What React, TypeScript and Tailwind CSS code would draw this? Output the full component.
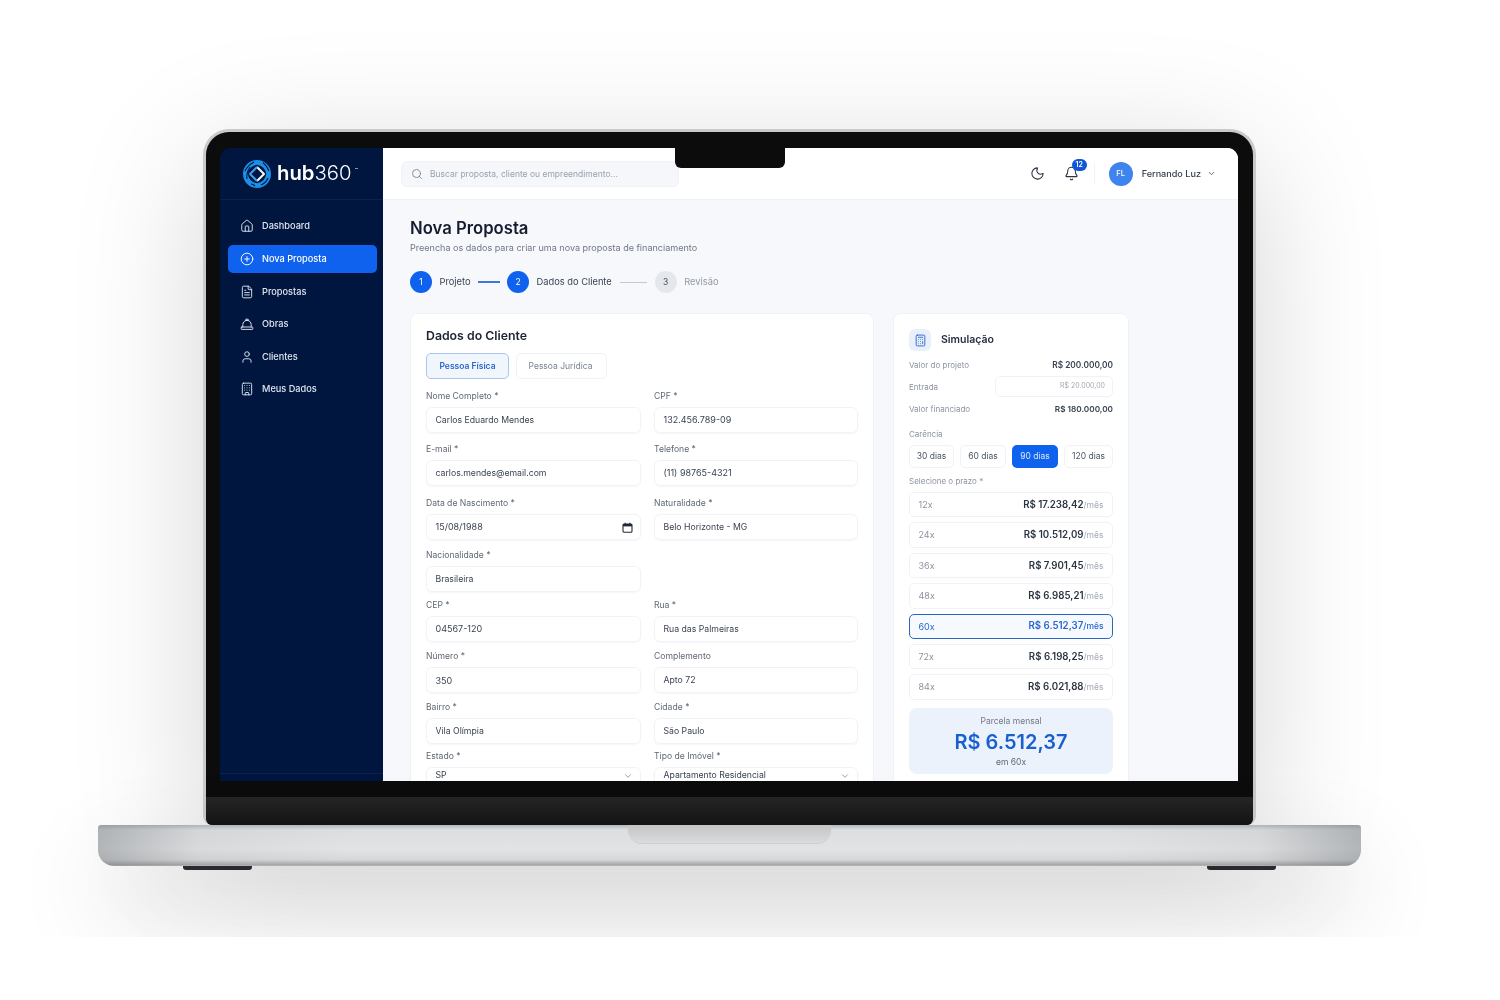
import React from "react";
import { House, CirclePlus, FileText, User, Building, Search, Moon, Bell, ChevronDown, Calculator } from "lucide-react";

function HatGlyph({ size }: { size: number; strokeWidth: number }) {
  return (
    <svg width={size} height={size} viewBox="0 0 14 14" fill="none" stroke="currentColor" strokeWidth={0.95} strokeLinecap="round" strokeLinejoin="round">
      <rect x="1.2" y="10" width="11.6" height="2.4" rx="0.6" />
      <path d="M2.8 10V7.6a4.2 4.2 0 0 1 8.4 0V10" />
      <path d="M5.8 3.6V2.2h2.4v1.4" />
    </svg>
  );
}

const nav = [
  { label: "Dashboard", Icon: House },
  { label: "Nova Proposta", Icon: CirclePlus, active: true },
  { label: "Propostas", Icon: FileText },
  { label: "Obras", Icon: HatGlyph },
  { label: "Clientes", Icon: User },
  { label: "Meus Dados", Icon: Building },
];

function Logo() {
  return (
    <svg width="30" height="30" viewBox="0 0 30 30" fill="none" className="shrink-0">
      <circle cx="15" cy="15" r="11.5" stroke="#1c8fe8" strokeWidth="5" />
      <path d="M3 12 Q6 6 12 3 M5 20 Q4 14 8 8 M9 25 Q11 25 13 27 M21 3.5 Q25 7 27 12 M26 19 Q24 24 19 26" stroke="#001640" strokeWidth="1.1" />
      <path d="M15 5.5 L24.5 15 L15 24.5 L5.5 15 Z" fill="#001640" strokeLinejoin="round" />
      <path d="M15 8 L22 15 L15 22" stroke="#f2f8ff" strokeWidth="2" strokeLinejoin="round" />
      <path d="M15 8 L8 15 L15 22" stroke="#3aa0f0" strokeWidth="2" strokeLinejoin="round" />
    </svg>
  );
}

function Sidebar() {
  return (
    <aside className="w-[163px] shrink-0 bg-[#00163f] flex flex-col">
      <div className="h-[52px] shrink-0 border-b border-[#0a2250] flex items-center pl-[22px] gap-[3px]">
        <div className="mr-[2px]">
          <Logo />
        </div>
        <span className="text-[20.3px] leading-none text-white">
          <span className="font-semibold">hub</span>
          <span className="font-light">360</span>
        </span>
        <span className="w-[3px] h-[1px] bg-[#4aa3ff] mb-[10px]" />
      </div>
      <nav className="flex flex-col gap-[5px] pl-[8px] pr-[6px] pt-[12.6px]">
        {nav.map(({ label, Icon, active }) => (
          <div
            key={label}
            className={`h-[27.6px] rounded-[5px] flex items-center gap-[8px] pl-[12px] text-[9.2px] font-medium ${active ? "bg-[#0f62ee] text-white" : "text-[#dfe6f2]"}`}
          >
            <Icon size={14} strokeWidth={1.6} />
            <span>{label}</span>
          </div>
        ))}
      </nav>
      <div className="mt-auto mb-[7px] h-px bg-[#0a2250]" />
    </aside>
  );
}

function Topbar() {
  return (
    <header className="h-[52px] shrink-0 bg-white border-b border-[#eef1f5] flex items-center pl-[18px] pr-[22px]">
      <div className="w-[278px] h-[26px] bg-[#f5f7fa] border border-[#f0f2f6] rounded-[6px] flex items-center pl-[9px] gap-[7px] text-[8.5px] text-[#9aa3b0]">
        <Search size={12} strokeWidth={1.6} className="text-[#6f7785]" />
        <span className="mt-[1px]">Buscar proposta, cliente ou empreendimento...</span>
      </div>
      <div className="ml-auto flex items-center">
        <Moon size={15} strokeWidth={1.7} className="text-[#2b3442]" />
        <div className="relative ml-[19px]">
          <Bell size={15} strokeWidth={1.7} className="text-[#2b3442]" />
          <span className="absolute -top-[7px] left-[8px] w-[15px] h-[12px] rounded-full bg-[#0f56d8] text-white text-[7px] font-semibold flex items-center justify-center">12</span>
        </div>
        <div className="w-px h-[22px] bg-[#f1f3f6] ml-[15px]" />
        <div className="ml-[14px] w-[24px] h-[24px] rounded-full bg-[#3f83ee] text-white text-[7.5px] font-medium flex items-center justify-center">FL</div>
        <span className="ml-[9px] mt-[1px] text-[9.1px] font-medium text-[#333c4b]">Fernando Luz</span>
        <ChevronDown size={9} strokeWidth={2.2} className="ml-[6px] text-[#4b5563]" />
      </div>
    </header>
  );
}

function Step({ n, label, state }: { n: number; label: string; state: "done" | "todo" }) {
  const done = state === "done";
  return (
    <div className="flex items-center gap-[7.5px]">
      <div className={`w-[22px] h-[22px] rounded-full flex items-center justify-center text-[8.5px] ${done ? "bg-[#0f62ee] text-white" : "bg-[#e4e7ec] text-[#4b5563]"}`}>{n}</div>
      <span className={`text-[9.3px] ${done ? "text-[#3a4352]" : "text-[#939aa6]"}`}>{label}</span>
    </div>
  );
}

function DateGlyph() {
  return (
    <svg width="11" height="11" viewBox="0 0 11 11" fill="none" className="text-[#1f2937]">
      <rect x="1" y="2" width="9" height="8.2" rx="1" stroke="currentColor" strokeWidth="1.1" />
      <rect x="1" y="2" width="9" height="2.4" fill="currentColor" />
      <path d="M3.2 0.8v1.6M7.8 0.8v1.6" stroke="currentColor" strokeWidth="1.1" />
    </svg>
  );
}

function Field({ label, value, kind, gap }: { label: string; value: string; kind?: "date" | "select"; gap: string }) {
  const numeric = /^[\d(]/.test(value);
  return (
    <div className={gap}>
      <div className="h-[12px] leading-[12px] text-[8.6px] text-[#5f6875]">{label}</div>
      <div
        className={`mt-[5px] h-[26px] bg-white border border-[#f1f3f6] rounded-[6px] shadow-[0_1px_2px_rgba(15,23,42,0.04)] flex justify-between pl-[8.5px] pr-[7px] text-[#3a4352] ${numeric ? "text-[9px]" : "text-[8.7px]"} ${kind === "select" ? "items-start pt-[1px]" : "items-center"}`}
      >
        <span className={numeric || kind ? "" : "mt-[1px]"}>{value}</span>
        {kind === "date" && <DateGlyph />}
        {kind === "select" && <ChevronDown size={10} strokeWidth={1.6} className="mt-[2px] text-[#6b7280]" />}
      </div>
    </div>
  );
}

function FormCard() {
  return (
    <section className="w-[464px] h-[600px] shrink-0 bg-white border border-[#f0f2f6] rounded-[8px] pl-[15px] pt-[13px]">
      <h2 className="text-[12.3px] leading-[18px] font-semibold text-[#1d2433]">Dados do Cliente</h2>
      <div className="flex gap-[7px] mt-[8px]">
        <div className="w-[83px] h-[26px] rounded-[5px] border border-[#aac6ee] bg-[#f1f6fd] text-[#2b66cc] text-[8.5px] font-semibold flex items-center justify-center">Pessoa Física</div>
        <div className="w-[91px] h-[26px] rounded-[5px] border border-[#f0f2f6] bg-white text-[#7b8492] text-[8.5px] flex items-center justify-center pr-[2px]">Pessoa Jurídica</div>
      </div>
      <div className="grid grid-cols-[215px_204px] gap-x-[13px] mt-[11px]">
        <Field gap="" label="Nome Completo *" value="Carlos Eduardo Mendes" />
        <Field gap="" label="CPF *" value="132.456.789-09" />
        <Field gap="mt-[10px]" label="E-mail *" value="carlos.mendes@email.com" />
        <Field gap="mt-[10px]" label="Telefone *" value="(11) 98765-4321" />
        <Field gap="mt-[11px]" label="Data de Nascimento *" value="15/08/1988" kind="date" />
        <Field gap="mt-[11px]" label="Naturalidade *" value="Belo Horizonte - MG" />
        <Field gap="mt-[9px]" label="Nacionalidade *" value="Brasileira" />
        <div />
        <Field gap="mt-[7px]" label="CEP *" value="04567-120" />
        <Field gap="mt-[7px]" label="Rua *" value="Rua das Palmeiras" />
        <Field gap="mt-[8.4px]" label="Número *" value="350" />
        <Field gap="mt-[8.4px]" label="Complemento" value="Apto 72" />
        <Field gap="mt-[8px]" label="Bairro *" value="Vila Olímpia" />
        <Field gap="mt-[8px]" label="Cidade *" value="São Paulo" />
        <Field gap="mt-[6px]" label="Estado *" value="SP" kind="select" />
        <Field gap="mt-[6px]" label="Tipo de Imóvel *" value="Apartamento Residencial" kind="select" />
      </div>
    </section>
  );
}

const prazos = [
  ["12x", "R$ 17.238,42"],
  ["24x", "R$ 10.512,09"],
  ["36x", "R$ 7.901,45"],
  ["48x", "R$ 6.985,21"],
  ["60x", "R$ 6.512,37", true],
  ["72x", "R$ 6.198,25"],
  ["84x", "R$ 6.021,88"],
] as const;

function SimCard() {
  return (
    <section className="w-[236px] h-[600px] shrink-0 bg-white border border-[#f0f2f6] rounded-[8px] px-[15px] pt-[15px]">
      <div className="flex items-center gap-[10px]">
        <div className="w-[22px] h-[22px] rounded-[6px] bg-[#e9f0fb] flex items-center justify-center">
          <Calculator size={13} strokeWidth={1.7} className="text-[#2a68cc]" />
        </div>
        <span className="text-[10.5px] font-semibold text-[#273040]">Simulação</span>
      </div>
      <div className="mt-[8px] h-[12px] flex items-center justify-between">
        <span className="text-[8px] text-[#8b93a0]">Valor do projeto</span>
        <span className="text-[8.3px] font-semibold text-[#3a4352]">R$ 200.000,00</span>
      </div>
      <div className="mt-[5px] h-[21px] flex items-center justify-between">
        <span className="text-[8px] text-[#8b93a0]">Entrada</span>
        <div className="w-[118px] h-[21px] bg-white border border-[#f0f2f6] rounded-[5px] flex items-center justify-end pr-[7px] text-[7px] text-[#a3aab5]">R$ 20.000,00</div>
      </div>
      <div className="mt-[6px] h-[12px] flex items-center justify-between">
        <span className="text-[8px] text-[#8b93a0]">Valor financiado</span>
        <span className="text-[8.2px] font-semibold text-[#3a4352]">R$ 180.000,00</span>
      </div>
      <div className="mt-[13px] h-[12px] leading-[12px] text-[8px] text-[#8b93a0]">Carência</div>
      <div className="mt-[5px] grid grid-cols-[45px_46px_46px_49px] gap-[6px]">
        {["30 dias", "60 dias", "90 dias", "120 dias"].map((d) => (
          <div
            key={d}
            className={`h-[23px] rounded-[5px] flex items-center justify-center text-[8.5px] ${d === "90 dias" ? "bg-[#0f62ee] text-[#dce8fd]" : "bg-white border border-[#f0f2f6] text-[#4b5563]"}`}
          >
            {d}
          </div>
        ))}
      </div>
      <div className="mt-[7px] h-[12px] leading-[12px] text-[8px] text-[#8b93a0]">Selecione o prazo *</div>
      <div className="mt-[5px] flex flex-col gap-[5px]">
        {prazos.map(([n, v, sel]) => (
          <div
            key={n}
            className={`h-[25.4px] rounded-[5px] flex items-center justify-between pl-[8.5px] pr-[8.5px] text-[9px] ${sel ? "bg-[#f6f9fe] border-[1.5px] border-[#2b66c4] text-[#2b66cc]" : "bg-white border border-[#f0f2f6] text-[#8b93a0]"}`}
          >
            <span>{n}</span>
            <span className="mt-[1px]">
              <span className={`font-semibold text-[9.7px] ${sel ? "" : "text-[#2b3442]"}`}>{v}</span>
              <span className={`text-[8.5px] ${sel ? "font-medium" : "text-[#a3aab5]"}`}>/mês</span>
            </span>
          </div>
        ))}
      </div>
      <div className="mt-[8px] h-[66px] rounded-[8px] bg-[#ecf2fb] flex flex-col items-center pt-[7px]">
        <span className="text-[8.5px] leading-[12px] text-[#707887]">Parcela mensal</span>
        <span className="text-[20px] leading-[28px] font-semibold text-[#1a5fd0] mt-[1px]">R$ 6.512,37</span>
        <span className="text-[8.5px] leading-[12px] text-[#5f6875]">em 60x</span>
      </div>
    </section>
  );
}

function Screen() {
  return (
    <div className="relative ml-[14px] w-[1018px] h-[633px] rounded-t-[11px] overflow-hidden flex blur-[0.45px]" style={{ fontFamily: "Inter, 'Noto Sans', sans-serif" }}>
      <Sidebar />
      <div className="flex-1 min-w-0 flex flex-col bg-[#f6f8fb]">
        <Topbar />
        <main className="flex-1 pl-[27px] pt-[16px] overflow-hidden">
          <h1 className="text-[16.7px] leading-[24px] font-semibold text-[#141c2e]">Nova Proposta</h1>
          <p className="text-[9.06px] leading-[14px] mt-[1px] text-[#6f7785]">Preencha os dados para criar uma nova proposta de financiamento</p>
          <div className="flex items-center mt-[16px]">
            <Step n={1} label="Projeto" state="done" />
            <div className="w-[22px] h-[2px] bg-[#3f78d4] ml-[7.5px] mr-[7px]" />
            <Step n={2} label="Dados do Cliente" state="done" />
            <div className="w-[27px] h-[1px] bg-[#c3c9d2] ml-[8px] mr-[8px]" />
            <Step n={3} label="Revisão" state="todo" />
          </div>
          <div className="flex gap-[19px] mt-[20px] items-start">
            <FormCard />
            <SimCard />
          </div>
        </main>
      </div>
      <div className="absolute left-[455px] top-0 w-[110px] h-[20px] bg-[#0c0c0c] rounded-b-[6px]" />
    </div>
  );
}

export default function App() {
  return (
    <div className="w-[1500px] h-[1000px] bg-white overflow-hidden">
      <div className="h-[937px] overflow-hidden pt-[129px] pl-[98px]">
        <div className="w-[1263px] flex flex-col items-center">
          <div className="relative z-10 w-[1053px] h-[696px] rounded-t-[26px] rounded-b-[9px] border-[3px] border-b-0 border-[#c9cacc] bg-[#0c0c0c] pt-[16px] shadow-[0_30px_130px_rgba(0,0,0,0.17)]">
            <Screen />
            <div className="h-[16px]" />
            <div className="h-[28px] rounded-b-[6px] bg-gradient-to-b from-[#262626] to-[#141414]" />
          </div>
          <div className="relative z-20 w-[1263px] h-[41px] rounded-t-[3px] rounded-b-[16px] bg-[linear-gradient(to_right,rgba(120,125,128,0.45)_0%,rgba(150,155,158,0.12)_8%,rgba(255,255,255,0)_20%,rgba(255,255,255,0)_80%,rgba(150,155,158,0.12)_92%,rgba(120,125,128,0.45)_100%),linear-gradient(to_bottom,#b4b7b9_0%,#dcdee0_12%,#e2e3e5_60%,#d6d7d9_85%,#a4a6a8_97%,#bcbdbf_100%)] shadow-[0_40px_95px_-8px_rgba(0,0,0,0.3)] overflow-hidden flex justify-center">
            <div className="w-[203px] h-[19px] rounded-b-[14px] bg-gradient-to-b from-[#c2c4c6] to-[#dbdcde] border-b border-[#cdced0]" />
          </div>
          <div className="w-[1093px] flex justify-between">
            <div className="w-[69px] h-[4px] bg-[#2f3033] rounded-b-[3px]" />
            <div className="w-[69px] h-[4px] bg-[#2f3033] rounded-b-[3px]" />
          </div>
        </div>
      </div>
    </div>
  );
}
